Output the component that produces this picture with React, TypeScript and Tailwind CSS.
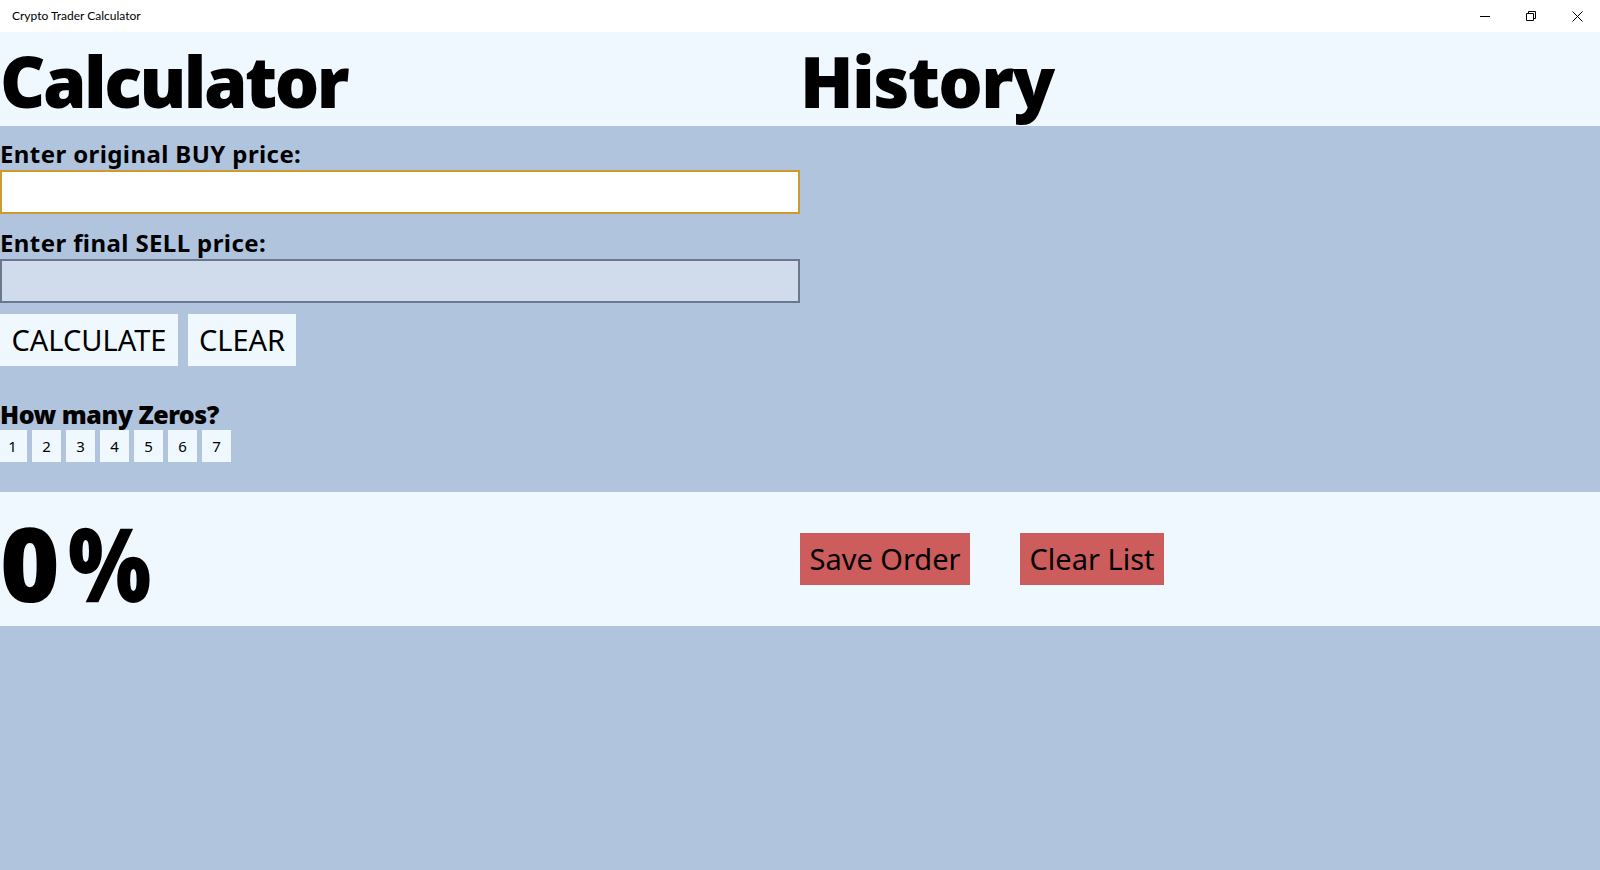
import { useState } from "react";

const black = { fontFamily: "'Noto Sans', 'Open Sans', sans-serif", fontWeight: 900 };
const body = { fontFamily: "'Noto Sans', 'Open Sans', sans-serif" };

function WindowControls() {
  return (
    <div className="flex h-full items-center">
      <div className="flex h-full w-[46px] items-center justify-center">
        <svg width="10" height="10" viewBox="0 0 10 10">
          <path d="M0 5.5h10" stroke="#000" strokeWidth="1" />
        </svg>
      </div>
      <div className="flex h-full w-[46px] items-center justify-center">
        <svg width="10" height="10" viewBox="0 0 10 10" fill="none">
          <path d="M0.5 2.5h7v7h-7z" stroke="#000" strokeWidth="1" />
          <path d="M2.5 2.5v-2h7v7h-2" stroke="#000" strokeWidth="1" />
        </svg>
      </div>
      <div className="flex h-full w-[46px] items-center justify-center">
        <svg width="11" height="11" viewBox="0 0 11 11">
          <path d="M0.5 0.5l10 10M10.5 0.5l-10 10" stroke="#000" strokeWidth="1" />
        </svg>
      </div>
    </div>
  );
}

const App = () => {
  const [buy, setBuy] = useState("");
  const [sell, setSell] = useState("");

  return (
    <div className="flex h-screen w-full flex-col overflow-hidden bg-[#B0C4DE] text-black">
      <div className="flex h-8 items-center justify-between bg-white pl-3">
        <span className="text-[12px]" style={{ fontFamily: "Lato, sans-serif" }}>
          Crypto Trader Calculator
        </span>
        <WindowControls />
      </div>

      <div className="flex h-[94px] bg-[#F0F8FF]" style={black}>
        <h1 className="w-[800px] pt-[14px] text-[70px] leading-[70px] tracking-[-2.5px]">Calculator</h1>
        <h1 className="pt-[14px] text-[70px] leading-[70px] tracking-[-1.6px]">History</h1>
      </div>

      <div className="flex h-[366px]">
        <div className="flex w-[800px] flex-col pt-[16px]">
          <label className="text-[24px] font-bold leading-[24px] tracking-[0.4px]" style={body}>
            Enter original BUY price:
          </label>
          <input
            autoFocus
            value={buy}
            onChange={(e) => setBuy(e.target.value)}
            className="mt-1 h-[44px] w-[800px] border-2 border-[#CC9A2E] bg-white px-[10px] text-[24px] outline-none"
            style={body}
          />
          <label className="mt-[17px] text-[24px] font-bold leading-[24px] tracking-[0.4px]" style={body}>
            Enter final SELL price:
          </label>
          <input
            value={sell}
            onChange={(e) => setSell(e.target.value)}
            className="mt-1 h-[44px] w-[800px] border-2 border-[#6B778A] bg-[#D0DCEB] px-[10px] text-[24px] outline-none"
            style={body}
          />
          <div className="mt-[11px] flex gap-[10px]" style={body}>
            <button className="h-[52px] w-[178px] bg-[#F0F8FF] text-[29px]">CALCULATE</button>
            <button className="h-[52px] w-[108px] bg-[#F0F8FF] text-[29px]">CLEAR</button>
          </div>
          <div className="mt-[36px] text-[25px] leading-[25px] tracking-[-0.5px]" style={black}>
            How many Zeros?
          </div>
          <div className="ml-[-2px] mt-[3px] flex gap-[5px]" style={body}>
            {[1, 2, 3, 4, 5, 6, 7].map((n) => (
              <button key={n} className="h-[32px] w-[29px] bg-[#F0F8FF] text-[15px]">
                {n}
              </button>
            ))}
          </div>
        </div>
      </div>

      <div className="flex h-[134px] bg-[#F0F8FF]">
        <div className="w-[800px] pt-[20px] text-[102px] leading-[102px]" style={black}>
          0<span className="ml-[8px] inline-block origin-left scale-x-[0.86]">%</span>
        </div>
        <div className="flex gap-[50px] pt-[41px]" style={body}>
          <button className="h-[52px] w-[170px] bg-[#CD5C5C] text-[29px]">Save Order</button>
          <button className="h-[52px] w-[144px] bg-[#CD5C5C] text-[29px]">Clear List</button>
        </div>
      </div>
    </div>
  );
};

export default App;
